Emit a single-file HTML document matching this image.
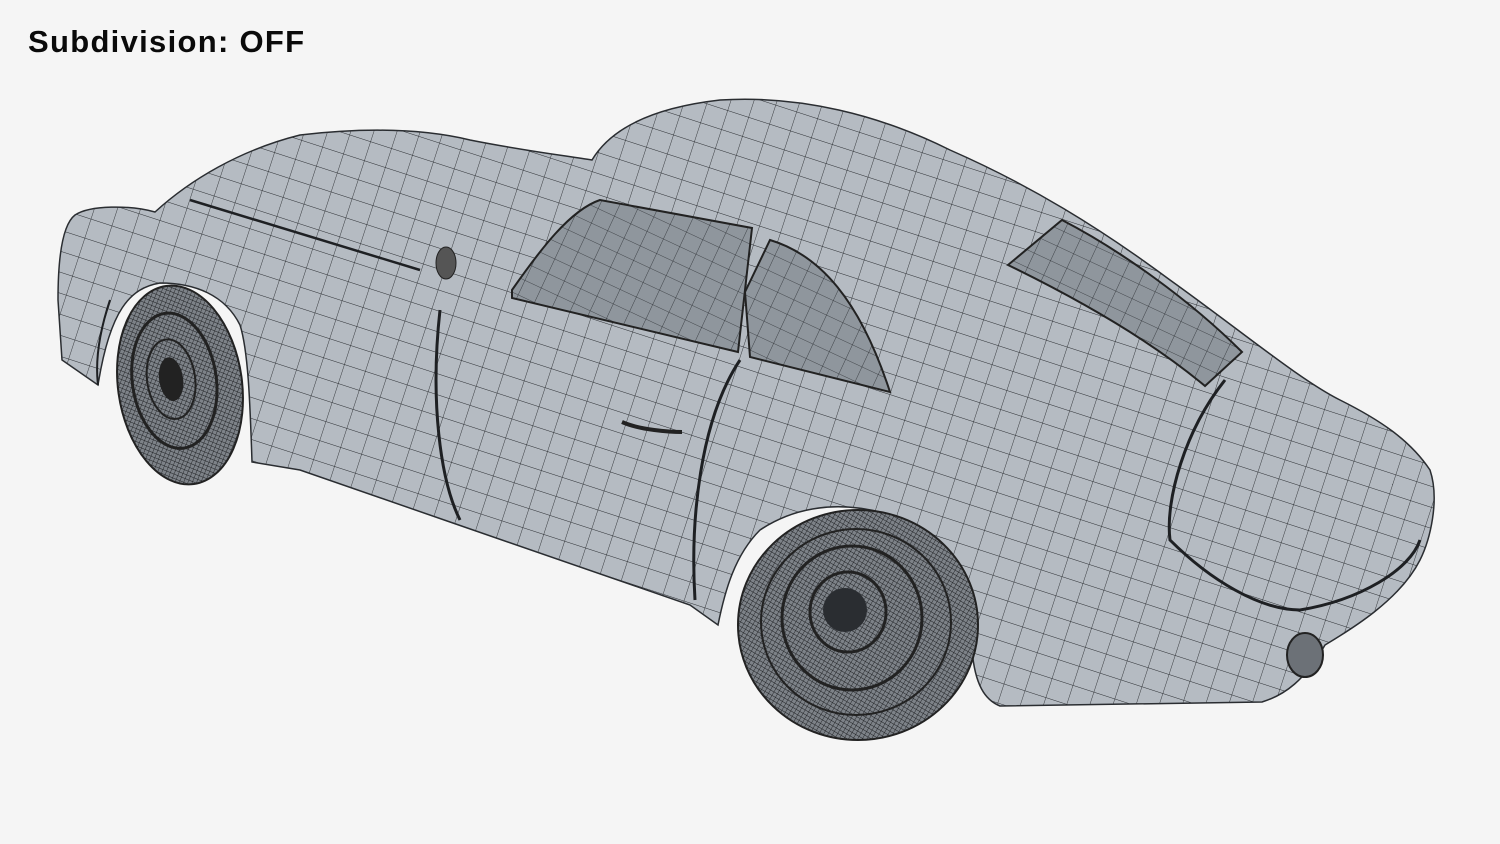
<!DOCTYPE html>
<html><head><meta charset="utf-8"><style>
html,body{margin:0;padding:0;background:#f5f5f5;width:1500px;height:844px;overflow:hidden}
.t{position:absolute;left:28px;top:24px;font:bold 31px "Liberation Sans",sans-serif;color:#0a0a0a;letter-spacing:1.3px}
svg{position:absolute;left:0;top:0}
</style></head><body>
<svg width="1500" height="844" viewBox="0 0 1500 844">
<defs>
<pattern id="g" width="22" height="20" patternUnits="userSpaceOnUse" patternTransform="rotate(18)">
<rect width="22" height="20" fill="#b5bbc2"/>
<path d="M0 0H22M0 0V20" stroke="#2a2d31" stroke-width="0.9" fill="none"/>
</pattern>
<pattern id="gw" width="18" height="16" patternUnits="userSpaceOnUse" patternTransform="rotate(25)">
<rect width="18" height="16" fill="#8f969d"/>
<path d="M0 0H18M0 0V16" stroke="#2a2d31" stroke-width="0.8" fill="none"/>
</pattern>
<pattern id="w" width="4" height="4" patternUnits="userSpaceOnUse" patternTransform="rotate(30)">
<rect width="4" height="4" fill="#7d8288"/>
<path d="M0 0H4M0 0V4" stroke="#1e2023" stroke-width="0.9" fill="none"/>
</pattern>
</defs>
<!-- front wheel -->
<g transform="rotate(-8 180 385)">
<ellipse cx="180" cy="385" rx="62" ry="100" fill="url(#w)" stroke="#222" stroke-width="2"/>
<ellipse cx="175" cy="380" rx="42" ry="68" fill="none" stroke="#222" stroke-width="3"/>
<ellipse cx="172" cy="378" rx="24" ry="40" fill="none" stroke="#222" stroke-width="2"/>
<ellipse cx="172" cy="378" rx="12" ry="22" fill="#222"/>
</g>
<!-- body -->
<path d="M58 300 C58 260 62 225 75 215 C90 205 130 205 155 212 C190 180 240 150 300 135 C360 128 420 128 470 140 C520 150 560 155 592 160 C610 130 650 108 720 100 C800 95 880 115 950 150 C1030 185 1100 228 1170 280 C1240 330 1300 380 1340 400 C1380 420 1410 440 1430 470 C1440 500 1430 540 1420 560 C1400 600 1350 630 1325 645 C1305 680 1285 695 1262 702 L1000 706 C985 700 975 685 972 650 C965 590 930 535 880 512 C830 500 790 510 760 530 C735 555 725 590 718 625 L690 605 L450 522 L300 470 L252 462 C250 400 248 350 240 325 C225 295 195 283 160 283 C130 288 110 310 98 385 L62 360 Z" fill="url(#g)" stroke="#2a2d31" stroke-width="1.5"/>
<!-- windows -->
<path d="M512 290 C540 250 570 210 600 200 L752 228 L738 352 L512 298 Z" fill="url(#gw)" stroke="#222" stroke-width="2"/>
<path d="M745 292 L770 240 C820 255 860 300 890 392 L750 357 Z" fill="url(#gw)" stroke="#222" stroke-width="2"/>
<path d="M1008 265 L1062 220 C1120 250 1190 300 1242 352 L1205 386 C1150 340 1080 300 1008 265 Z" fill="url(#gw)" stroke="#222" stroke-width="2"/>
<!-- panel lines -->
<path d="M440 310 C430 400 440 480 460 520" stroke="#1e2023" stroke-width="3" fill="none"/>
<path d="M740 360 C700 420 690 520 695 600" stroke="#1e2023" stroke-width="3" fill="none"/>
<path d="M1225 380 C1185 430 1165 500 1170 540 C1210 580 1260 610 1300 610 C1360 600 1410 570 1420 540" stroke="#1e2023" stroke-width="3" fill="none"/>
<path d="M190 200 L420 270" stroke="#1e2023" stroke-width="2.5" fill="none"/>
<path d="M110 300 C100 330 95 360 98 385" stroke="#1e2023" stroke-width="2" fill="none"/>
<ellipse cx="446" cy="263" rx="10" ry="16" fill="#555" stroke="#222"/>
<path d="M622 422 C640 430 670 432 682 432" stroke="#222" stroke-width="4" fill="none"/>
<ellipse cx="1305" cy="655" rx="18" ry="22" fill="#6c7177" stroke="#222" stroke-width="2"/>
<!-- rear wheel -->
<ellipse cx="858" cy="625" rx="120" ry="115" fill="url(#w)" stroke="#222" stroke-width="2"/>
<ellipse cx="856" cy="622" rx="95" ry="93" fill="none" stroke="#222" stroke-width="2"/>
<ellipse cx="852" cy="618" rx="70" ry="72" fill="none" stroke="#222" stroke-width="3"/>
<ellipse cx="848" cy="612" rx="38" ry="40" fill="none" stroke="#222" stroke-width="3"/>
<ellipse cx="845" cy="610" rx="22" ry="22" fill="#2a2d31"/>
</svg>
<div class="t">Subdivision: OFF</div>
</body></html>
